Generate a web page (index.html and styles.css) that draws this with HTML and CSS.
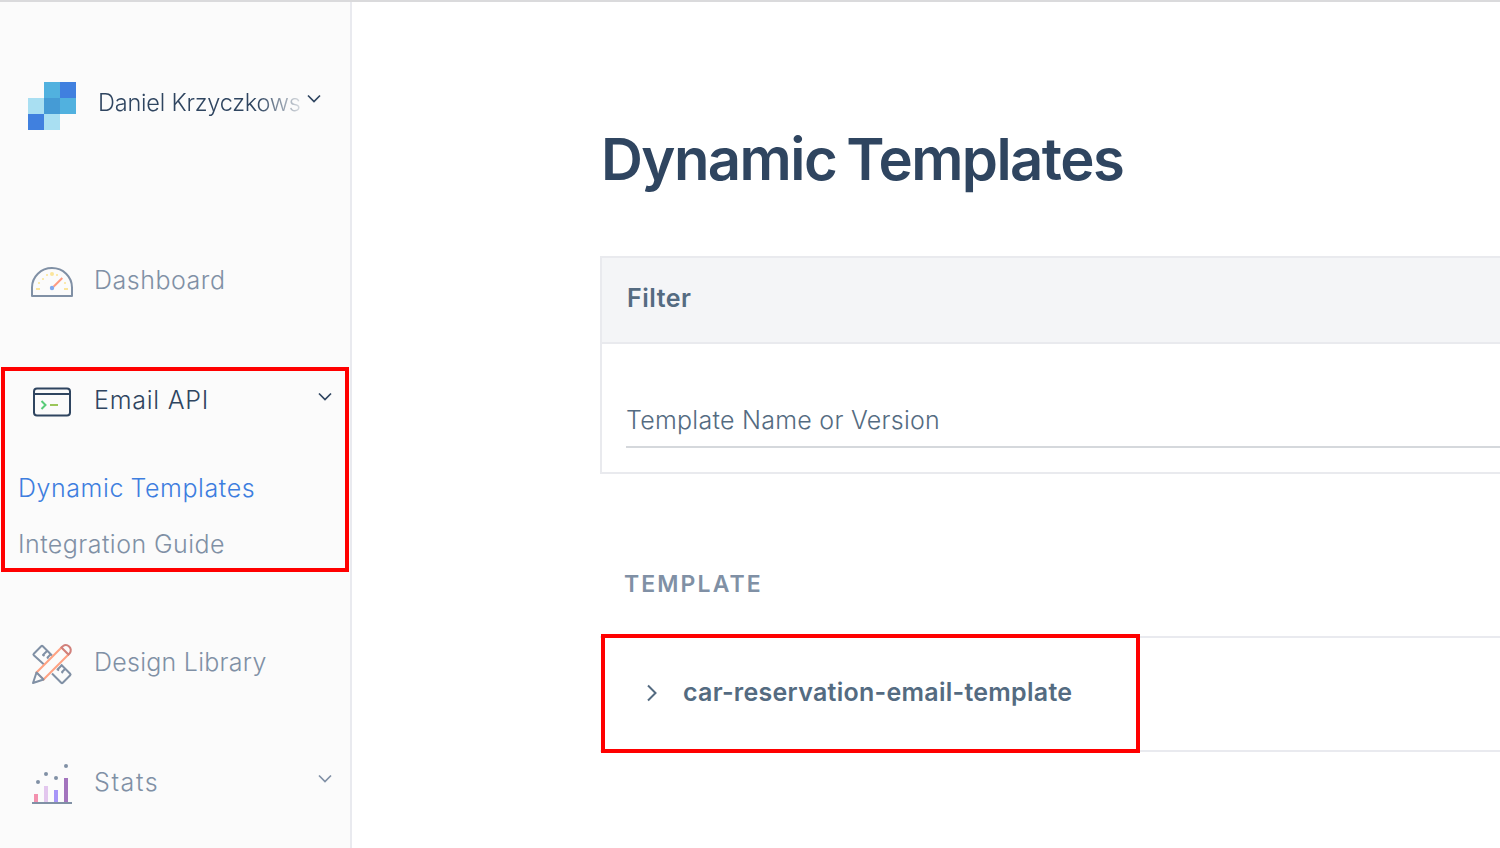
FILE: index.html
```html
<!DOCTYPE html>
<html lang="en">
<head>
<meta charset="utf-8">
<title>Dynamic Templates</title>
<link rel="stylesheet" href="styles.css">
</head>
<body>
<div class="app">
  <aside class="sidebar">
    <div class="account">
      <svg class="logo" viewBox="0 0 48 48" shape-rendering="crispEdges">
        <path fill="#51b1df" d="M16 0h16v16H16zM32 16h16v16H32z"/>
        <path fill="#4080df" d="M32 0h16v16H32zM0 32h16v16H0z"/>
        <path fill="#a9dff2" d="M0 16h16v16H0zM16 32h16v16H16z"/>
        <path fill="#459bd5" d="M16 16h16v16H16z"/>
      </svg>
      <span class="account-name">Daniel Krzyczkows</span>
      <svg class="chevron" viewBox="0 0 14 10"><path d="M1 1.5l6 6 6-6"/></svg>
    </div>
    <nav>
      <a class="item dashboard">
        <svg class="icon" viewBox="0 0 44 44">
          <path class="line" d="M2 36V27.500a20 19.500 0 0 1 40 0V36z"/>
          <g fill="#fbe59b"><circle cx="22" cy="14" r="2"/><circle cx="17" cy="15" r="1.100"/><circle cx="27" cy="15" r="1.100"/><circle cx="13" cy="19" r="1.100"/><circle cx="9" cy="23" r="1.100"/><circle cx="35" cy="23" r="1.100"/><path d="M6 28h4v2H6zM34 28h4v2h-4z"/></g>
          <path stroke="#ff9b80" stroke-width="2" d="M23.500 26.800l8.800-8.800"/>
          <circle cx="22" cy="28" r="2.200" fill="#82a9ec"/>
        </svg>
        <span class="t-dash">Dashboard</span>
      </a>
      <div class="group">
        <a class="item active">
          <svg class="icon" viewBox="0 0 44 44">
            <rect class="line" x="4" y="8.500" width="36" height="27" rx="3"/>
            <path class="line" d="M4 14h36"/>
            <path fill="none" stroke="#58cb78" stroke-width="2" d="M11.500 21l4 4-4 4"/>
            <path stroke="#9bc65b" stroke-width="2" d="M20 25h8"/>
          </svg>
          <span class="t-email">Email API</span>
          <svg class="chevron" viewBox="0 0 14 10"><path d="M1 1.500l6 6 6-6"/></svg>
        </a>
        <a class="sub selected"><span class="t-dyn">Dynamic Templates</span></a>
        <a class="sub"><span class="t-int">Integration Guide</span></a>
      </div>
      <a class="item design">
        <svg class="icon" viewBox="0 0 44 44">
          <g class="line">
            <path d="M14 22.500L3.800 13.300q-.8-.8 0-1.600l7.400-7.400q.8-.8 1.600 0L22 13.500M31 22.500l9.200 9.200q.8.8 0 1.600l-7.400 7.400q-.8.8-1.600 0L22 31.500"/>
            <path d="M17.500 8.500L13 13l1.500 1M21 12l-3.500 3.500 1 1M32 23l-4.500 4.500 1.500 1M35.500 26.500L32 30l1 1"/>
          </g>
          <path fill="#fbfbfb" stroke="#ffa282" stroke-width="2" d="M6.500 30.500L31.500 5.500l7 7L13.500 37.500z"/>
          <path class="line pencil-tip" d="M6.500 30.500L3 41l10.500-3.500z"/>
          <path fill="#fbfbfb" stroke="#d1807b" stroke-width="2" d="M31.500 5.500l1.300-1.300c4.500-3.500 10 2 7 7l-1.300 1.300z"/>
        </svg>
        <span class="t-design">Design Library</span>
      </a>
      <a class="item stats">
        <svg class="icon" viewBox="0 0 44 44">
          <path fill="#f391ae" d="M4 32h4v8H4z"/><path fill="#e3c7ee" d="M14 24h4v16h-4z"/><path fill="#a795f8" d="M24 28h4v12h-4z"/><path fill="#a374bd" d="M34 16h4v24h-4z"/>
          <path fill="#8090a5" d="M2 40h40v2H2z"/>
          <g fill="#8090a5"><circle cx="8" cy="20" r="2"/><circle cx="16" cy="12" r="2"/><circle cx="26" cy="16" r="2"/><circle cx="36" cy="4" r="2"/></g>
        </svg>
        <span class="t-stats">Stats</span>
        <svg class="chevron" viewBox="0 0 14 10"><path d="M1 1.500l6 6 6-6"/></svg>
      </a>
    </nav>
  </aside>
  <main class="main">
    <h1><span class="t-h1">Dynamic Templates</span></h1>
    <section class="filter">
      <header><span class="t-filter">Filter</span></header>
      <div class="filter-body"><div class="field"><span class="t-field">Template Name or Version</span></div></div>
    </section>
    <section class="table">
      <div class="table-head"><span class="t-th">TEMPLATE</span></div>
      <div class="row">
        <div class="marked">
          <svg class="caret" viewBox="0 0 12 18"><path d="M2 1.500L9.500 9 2 16.500"/></svg>
          <span class="t-car">car-reservation-email-template</span>
        </div>
      </div>
    </section>
  </main>
</div>
</body>
</html>
```
FILE: styles.css
```css
* { box-sizing: border-box; }
body { margin: 0; background: #fff; font-family: Inter, "Liberation Sans", sans-serif; font-size: 25px; line-height: 32px; font-weight: 300; color: #546b81; }
.app { display: flex; height: 848px; overflow: hidden; border-top: 2px solid #dadadc; }
svg { display: block; flex: none; }
span { white-space: nowrap; }
.sidebar { flex: none; width: 352px; padding-top: 80px; background: #fbfbfb; border-right: 2px solid #e9eaef; color: #8090a5; }
.account { display: flex; height: 48px; padding-left: 28px; color: #2f4560; }
.logo { width: 48px; height: 48px; }
.account-name { width: 204px; margin: 5px 5px 0 22px; font-size: 23.5px; letter-spacing: -.2px; -webkit-mask-image: linear-gradient(90deg, #000 78%, rgba(0,0,0,.15)); mask-image: linear-gradient(90deg, #000 78%, rgba(0,0,0,.15)); }
.chevron { width: 14px; height: 10px; fill: none; stroke: currentColor; stroke-width: 1.7; }
.account .chevron { margin-top: 12px; }
.item { display: flex; height: 32px; padding: 0 18.5px 0 30px; }
.icon { width: 44px; height: 44px; margin-right: 20px; overflow: visible; }
.line { fill: none; stroke: currentColor; stroke-width: 2; stroke-linejoin: round; }
.pencil-tip { fill: #fbfbfb; }
.item .chevron { margin: 8px 0 0 auto; }
.dashboard { margin-top: 134px; }
.dashboard .icon, .group .icon { margin-top: -4px; }
.group { width: 348px; height: 205px; margin: 71px 0 0 1px; padding: 13px 0 8px; border: 4px solid #f00; }
.group .item { padding: 0 13.5px 0 25px; }
.active { color: #2f4560; }
.sub { display: block; margin-top: 24px; padding-left: 13px; }
.selected { margin-top: 56px; color: #3e7edf; }
.design { margin-top: 74px; }
.design .icon { margin-top: -4px; }
.stats { margin-top: 88px; }
.stats .icon { margin-top: -4px; }
.t-dash { letter-spacing: .52px; }
.t-email { letter-spacing: .75px; }
.t-dyn { letter-spacing: .57px; word-spacing: -1px; }
.t-int { letter-spacing: .45px; }
.t-design { letter-spacing: .26px; }
.t-stats { letter-spacing: 1.6px; }
.main { flex: 1; min-width: 0; padding: 121px 0 0 248px; }
h1 { margin: 0; padding-left: 1px; font-size: 58px; line-height: 72px; font-weight: 640; letter-spacing: -1.55px; word-spacing: -3px; color: #2f4560; }
.filter { margin-top: 61px; border: 2px solid #e9eaee; border-right: 0; }
.filter header { height: 86px; padding: 24px 25px 0; background: #f4f5f7; border-bottom: 2px solid #e9eaee; font-weight: 600; letter-spacing: .5px; }
.filter-body { height: 128px; padding: 60px 0 24px 24px; }
.field { height: 44px; border-bottom: 2px solid #d5d8dc; letter-spacing: .26px; }
.table { margin-top: 93px; font-weight: 600; }
.table-head { height: 69px; padding: 1px 0 0 24px; font-size: 23px; letter-spacing: 2.1px; color: #8090a5; }
.row { height: 116px; border-top: 2px solid #e9eaef; border-bottom: 2px solid #e9eaef; }
.marked { display: flex; width: 539px; height: 119px; margin: -4px 0 0 1px; padding: 38px 0 0 41px; border: 4px solid #f00; letter-spacing: .27px; }
.caret { width: 12px; height: 18px; margin: 8px 25px 0 0; fill: none; stroke: currentColor; stroke-width: 2; }
```
